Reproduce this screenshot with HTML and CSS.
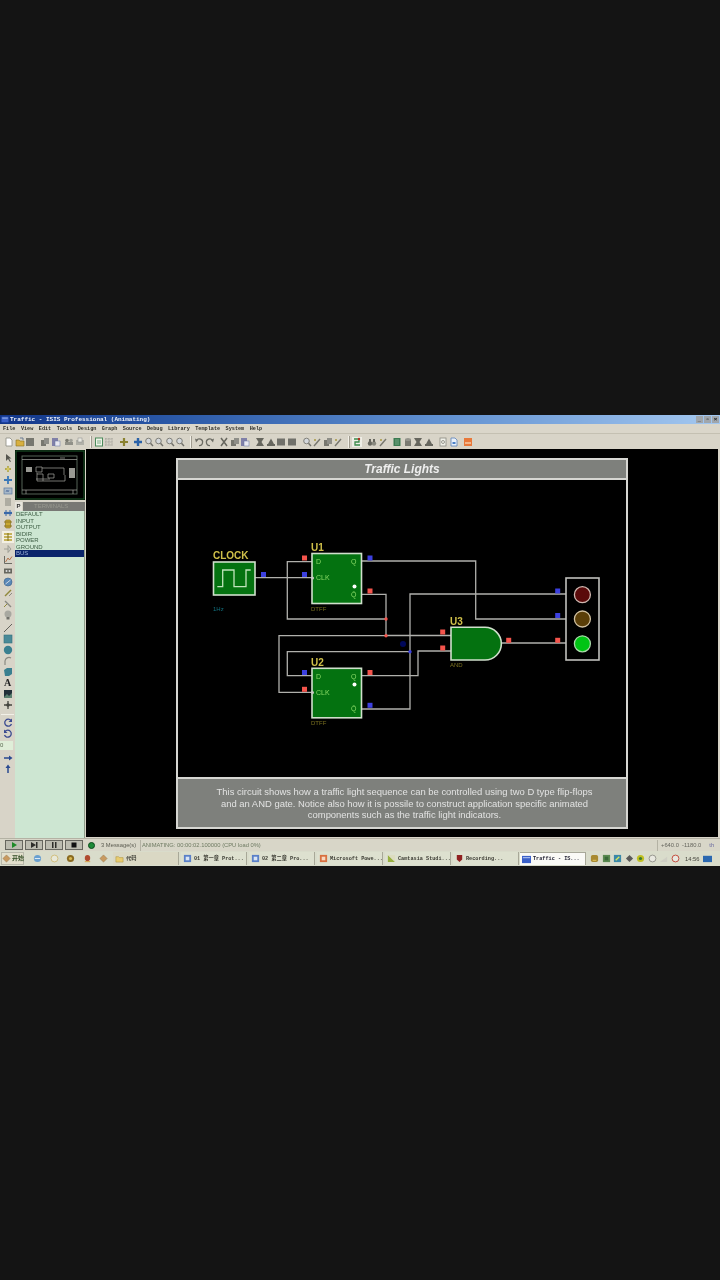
FILE: index.html
```html
<!DOCTYPE html>
<html lang="en">
<head>
<meta charset="utf-8">
<title>Traffic - ISIS Professional</title>
<link rel="stylesheet" href="styles.css">
</head>
<body>
<svg class="defs" aria-hidden="true">
  <symbol id="doc" viewBox="0 0 10 10"><path d="M2 1h4l2 2v6H2z" fill="#fff" stroke="#8a8a80" stroke-width=".8"/></symbol>
  <symbol id="open" viewBox="0 0 10 10"><path d="M1 3h3l1 1h4v5H1z" fill="#d8b040" stroke="#8a7020" stroke-width=".6"/><path d="M5 1h3v2" fill="none" stroke="#6a7a90"/></symbol>
  <symbol id="save" viewBox="0 0 10 10"><rect x="1" y="1" width="8" height="8" fill="#77776f"/></symbol>
  <symbol id="copy" viewBox="0 0 10 10"><rect x="1" y="3" width="5" height="6" fill="#77776f"/><rect x="4" y="1" width="5" height="6" fill="#8e8e88"/></symbol>
  <symbol id="paste" viewBox="0 0 10 10"><rect x="1" y="1" width="6" height="8" fill="#8080a8"/><rect x="4" y="4" width="5" height="5" fill="#e8e8f0" stroke="#6070a0" stroke-width=".5"/></symbol>
  <symbol id="print" viewBox="0 0 10 10"><path d="M1 5h8v3H1z" fill="#909088"/><circle cx="3" cy="3.500" r="1.800" fill="#78786f"/><circle cx="7" cy="3.500" r="1.800" fill="#a0a098"/></symbol>
  <symbol id="page" viewBox="0 0 10 10"><rect x="1" y="3" width="8" height="5" fill="#b0b0a8"/><rect x="3" y="1" width="4" height="4" fill="#e8e8e0" stroke="#888" stroke-width=".5"/></symbol>
  <symbol id="sheet" viewBox="0 0 10 10"><rect x="1.500" y="1" width="7" height="8" fill="#eef4e8" stroke="#4a8a5a"/><path d="M3 4h4M3 6h4" stroke="#4a8a5a" stroke-width=".7"/></symbol>
  <symbol id="grid" viewBox="0 0 10 10"><path d="M1 2h8M1 5h8M1 8h8M2 1v8M5 1v8M8 1v8" stroke="#9a9a92" stroke-width=".8" stroke-dasharray="1 .6"/></symbol>
  <symbol id="cross" viewBox="0 0 10 10"><path d="M5 1v8M1 5h8" stroke="#8a8230" stroke-width="2.200"/></symbol>
  <symbol id="plus" viewBox="0 0 10 10"><path d="M5 1v8M1 5h8" stroke="#2a62a8" stroke-width="2.400"/></symbol>
  <symbol id="zoom" viewBox="0 0 10 10"><circle cx="4.500" cy="4" r="2.800" fill="#d4d8dc" stroke="#80807a"/><path d="M6.500 6.200 9 9" stroke="#70706a" stroke-width="1.400"/></symbol>
  <symbol id="undo" viewBox="0 0 10 10"><path d="M2.500 3.500A3.300 3.300 0 1 1 5 8.500" fill="none" stroke="#6a6a62" stroke-width="1.200"/><path d="M1 1.500 4 3 2 5.500z" fill="#6a6a62"/></symbol>
  <symbol id="redo" viewBox="0 0 10 10"><path d="M7.500 3.500A3.300 3.300 0 1 0 5 8.500" fill="none" stroke="#6a6a62" stroke-width="1.200"/><path d="M9 1.500 6 3 8 5.500z" fill="#6a6a62"/></symbol>
  <symbol id="cut" viewBox="0 0 10 10"><path d="M2 1l6 8M8 1 2 9" stroke="#66665e" stroke-width="1.500"/></symbol>
  <symbol id="block" viewBox="0 0 10 10"><rect x="1" y="1.500" width="8" height="7" fill="#70706a"/></symbol>
  <symbol id="mirror" viewBox="0 0 10 10"><path d="M1 1h8L6.500 5 9 9H1l2.500-4z" fill="#66665e"/></symbol>
  <symbol id="tri" viewBox="0 0 10 10"><path d="M5 1.500 8 7H2z" fill="#66665e"/><rect x="1" y="7" width="8" height="2" fill="#66665e"/></symbol>
  <symbol id="wand" viewBox="0 0 10 10"><path d="M2 9 8 2" stroke="#77776f" stroke-width="1.400"/><circle cx="3" cy="3" r="1" fill="#a89840"/></symbol>
  <symbol id="net" viewBox="0 0 10 10"><rect x="0" y="0" width="10" height="10" fill="#eeeee6"/><path d="M2 2h5v3H3v3h5" fill="none" stroke="#3a8a4a" stroke-width="1.300"/><circle cx="7" cy="2" r="1.200" fill="#b03020"/></symbol>
  <symbol id="bino" viewBox="0 0 10 10"><circle cx="3" cy="6.500" r="2.200" fill="#66665e"/><circle cx="7" cy="6.500" r="2.200" fill="#88887e"/><path d="M2 2h2v3H2zM6 2h2v3H6z" fill="#66665e"/></symbol>
  <symbol id="chip" viewBox="0 0 10 10"><rect x="1.500" y="1" width="7" height="8" fill="#3a7a50"/><path d="M3 3h4M3 5h4M3 7h4" stroke="#a0c8a8" stroke-width=".6"/></symbol>
  <symbol id="drum" viewBox="0 0 10 10"><path d="M2 3h6v6H2z" fill="#7a7a72"/><ellipse cx="5" cy="2.500" rx="3" ry="1.500" fill="#94948c"/></symbol>
  <symbol id="note" viewBox="0 0 10 10"><rect x="2" y="1" width="6" height="8" fill="#f0f0e8" stroke="#8a8a82" stroke-width=".8"/><circle cx="5" cy="5" r="1.500" fill="none" stroke="#77776f" stroke-width=".7"/></symbol>
  <symbol id="bluedoc" viewBox="0 0 10 10"><path d="M2 1h4l2 2v6H2z" fill="#e8f0fa" stroke="#5a80b8" stroke-width=".8"/><path d="M3.500 5h3v2h-3z" fill="#4a80c8"/></symbol>
  <symbol id="orange" viewBox="0 0 10 10"><rect x="1" y="1" width="8" height="8" fill="#e8783a"/><path d="M2 6h6" stroke="#fbe0c0" stroke-width="1.200"/></symbol>
  <symbol id="arrow" viewBox="0 0 10 10"><path d="M3 1v7l2-2 2 3 1-.6-2-3h2.500z" fill="#55554e"/></symbol>
  <symbol id="pin" viewBox="0 0 10 10"><path d="M2 5h6M5 2v6" stroke="#b0a850" stroke-width="1.800"/><circle cx="5" cy="5" r="1.500" fill="#d8c860"/></symbol>
  <symbol id="diamond" viewBox="0 0 10 10"><path d="M5 1v8M1 5h8" stroke="#3a78b8" stroke-width="1.800"/></symbol>
  <symbol id="label" viewBox="0 0 10 10"><rect x="1" y="2" width="8" height="6" fill="#a8b8c8" stroke="#5a78a0" stroke-width=".7"/><path d="M3 6 4 4l1 2 1-2" stroke="#3a5a90" stroke-width=".6" fill="none"/></symbol>
  <symbol id="lines" viewBox="0 0 10 10"><path d="M2 2h6M2 4h6M2 6h6M2 8h6" stroke="#84847c" stroke-width="1"/></symbol>
  <symbol id="bus" viewBox="0 0 10 10"><path d="M1 5h8" stroke="#3a68a8" stroke-width="2.200"/><path d="M3 2v6M7 2v6" stroke="#3a68a8"/></symbol>
  <symbol id="gold" viewBox="0 0 10 10"><rect x="2.500" y="1" width="5" height="8" rx="1" fill="#c8a830" stroke="#806a10" stroke-width=".6"/><path d="M1 3h8M1 7h8" stroke="#907820"/></symbol>
  <symbol id="goldsel" viewBox="0 0 10 10"><path d="M1 2h8M1 5h8M1 8h8" stroke="#b8a030" stroke-width="1.400"/><path d="M5 1v8" stroke="#807010"/></symbol>
  <symbol id="play" viewBox="0 0 10 10"><path d="M5 1.500 8 5 5 8.500zM1 5h4" fill="#c8c8c0" stroke="#94948c" stroke-width=".8"/></symbol>
  <symbol id="chart" viewBox="0 0 10 10"><path d="M1.500 1v7.500H9" fill="none" stroke="#6a6a62"/><path d="M2.500 7 5 3l1.500 2L9 1.500" fill="none" stroke="#b06a40" stroke-width=".9"/></symbol>
  <symbol id="tape" viewBox="0 0 10 10"><rect x="1" y="2.500" width="8" height="5" fill="#66665e"/><circle cx="3.500" cy="5" r="1" fill="#ddd"/><circle cx="6.500" cy="5" r="1" fill="#ddd"/></symbol>
  <symbol id="disc" viewBox="0 0 10 10"><circle cx="5" cy="5" r="4" fill="#5a88b8" stroke="#3a6088" stroke-width=".6"/><path d="M2.500 7 7.500 3" stroke="#d0d8e0"/></symbol>
  <symbol id="probe" viewBox="0 0 10 10"><path d="M2 8 8 2" stroke="#90883a" stroke-width="1.400"/><path d="M6 8 9 5" stroke="#8a8a82"/></symbol>
  <symbol id="probe2" viewBox="0 0 10 10"><path d="M2 2l6 6" stroke="#8a8a82" stroke-width="1.400"/><path d="M1 8 4 5" stroke="#90883a"/></symbol>
  <symbol id="lamp" viewBox="0 0 10 10"><circle cx="5" cy="4" r="3.500" fill="#a8a8a0"/><rect x="3.500" y="7" width="3" height="2.500" fill="#70706a"/></symbol>
  <symbol id="line" viewBox="0 0 10 10"><path d="M1 9 9 1" stroke="#55554e" stroke-width=".9"/></symbol>
  <symbol id="box" viewBox="0 0 10 10"><rect x="1" y="1" width="8" height="8" fill="#4a8a98" stroke="#34707c" stroke-width=".6"/></symbol>
  <symbol id="ball" viewBox="0 0 10 10"><circle cx="5" cy="5" r="4.200" fill="#3a8090"/></symbol>
  <symbol id="arc" viewBox="0 0 10 10"><path d="M2 9V5a4 4 0 0 1 6-3" fill="none" stroke="#8a8a82" stroke-width="1.200"/></symbol>
  <symbol id="poly" viewBox="0 0 10 10"><path d="M1 3 4 1h5v6L6 9H2z" fill="#3a8090"/></symbol>
  <symbol id="pic" viewBox="0 0 10 10"><rect x="1" y="1" width="8" height="8" fill="#23303a"/><path d="M1 8 4 5l2 2 3-3v5H1z" fill="#5a8070"/></symbol>
  <symbol id="star" viewBox="0 0 10 10"><path d="M5 1v8M1 5h8" stroke="#44443e" stroke-width="1.300"/><circle cx="5" cy="5" r="1.700" fill="#44443e"/></symbol>
  <symbol id="rotr" viewBox="0 0 10 10"><path d="M8 2.500A3.500 3.500 0 1 0 8.500 6" fill="none" stroke="#3a4a90" stroke-width="1.300"/><path d="M9 .5V4H5.500z" fill="#3a4a90"/></symbol>
  <symbol id="rotl" viewBox="0 0 10 10"><path d="M2 2.500A3.500 3.500 0 1 1 1.500 6" fill="none" stroke="#3a4a90" stroke-width="1.300"/><path d="M1 .5V4h3.500z" fill="#3a4a90"/></symbol>
  <symbol id="flipx" viewBox="0 0 10 10"><path d="M1 5h7" stroke="#2a4a90" stroke-width="1.500"/><path d="M6 2.500 9.500 5 6 7.500z" fill="#2a4a90"/></symbol>
  <symbol id="flipy" viewBox="0 0 10 10"><path d="M5 9V3" stroke="#2a4a90" stroke-width="1.500"/><path d="M2.500 4 5 .5 7.500 4z" fill="#2a4a90"/></symbol>
  <symbol id="ie" viewBox="0 0 10 10"><circle cx="5" cy="5" r="4" fill="#6aa0d0"/><path d="M2 5h6" stroke="#e8f0f8"/></symbol>
  <symbol id="shell" viewBox="0 0 10 10"><circle cx="5" cy="5" r="3.800" fill="#e8e8d8" stroke="#c8b060" stroke-width=".8"/></symbol>
  <symbol id="ring" viewBox="0 0 10 10"><circle cx="5" cy="5" r="4" fill="#8a6a20"/><circle cx="5" cy="5" r="1.800" fill="#d8b850"/></symbol>
  <symbol id="qq" viewBox="0 0 10 10"><ellipse cx="5" cy="4.500" rx="3" ry="3.500" fill="#b04a30"/><path d="M2 8.500h6" stroke="#d8a040"/></symbol>
  <symbol id="tag" viewBox="0 0 10 10"><path d="M5 1 9 5 5 9 1 5z" fill="#c89a60" stroke="#8a6a3a" stroke-width=".5"/></symbol>
  <symbol id="folder" viewBox="0 0 10 10"><path d="M1 3h3l1 1h4v5H1z" fill="#e8cc70" stroke="#a08830" stroke-width=".5"/></symbol>
  <symbol id="word" viewBox="0 0 10 10"><rect x="1" y="1" width="8" height="8" fill="#5a80c8"/><path d="M3 3h4v4H3z" fill="#d8e4f4"/></symbol>
  <symbol id="ppt" viewBox="0 0 10 10"><rect x="1" y="1" width="8" height="8" fill="#d87040"/><path d="M3 3h4v4H3z" fill="#f8d8c0"/></symbol>
  <symbol id="cam" viewBox="0 0 10 10"><path d="M1 1 9 9H1z" fill="#98b040"/><path d="M1 1h8v8z" fill="#dcdcc0"/></symbol>
  <symbol id="rec" viewBox="0 0 10 10"><path d="M2 1h6v5L5 9 2 6z" fill="#902020"/></symbol>
  <symbol id="win" viewBox="0 0 10 10"><rect x="0" y="1" width="10" height="8" fill="#3a60c8"/><path d="M1 3h8" stroke="#c8d8f8"/></symbol>
  <symbol id="t1" viewBox="0 0 10 10"><rect x="1" y="1" width="8" height="8" rx="2" fill="#a88a30"/><path d="M3 7h4" stroke="#e8c860"/></symbol>
  <symbol id="t2" viewBox="0 0 10 10"><rect x="1" y="1" width="8" height="8" fill="#5a8a50"/><rect x="3" y="3" width="4" height="4" fill="#3a6a38"/></symbol>
  <symbol id="t3" viewBox="0 0 10 10"><rect x="1" y="1" width="8" height="8" fill="#3a88a8"/><path d="M3 7 7 3" stroke="#d8e858" stroke-width="1.400"/></symbol>
  <symbol id="t4" viewBox="0 0 10 10"><path d="M5 1 9 5 5 9 1 5z" fill="#5a5a58"/></symbol>
  <symbol id="t5" viewBox="0 0 10 10"><circle cx="5" cy="5" r="4" fill="#c0c020"/><circle cx="5" cy="5" r="1.800" fill="#3a7a30"/></symbol>
  <symbol id="t6" viewBox="0 0 10 10"><circle cx="5" cy="5" r="3.800" fill="#e8e8e0" stroke="#909088"/></symbol>
  <symbol id="t7" viewBox="0 0 10 10"><path d="M1 9 9 3v6z" fill="#cfcfc4"/></symbol>
  <symbol id="t8" viewBox="0 0 10 10"><circle cx="5" cy="5" r="3.800" fill="#e8e8e0" stroke="#c04030"/></symbol>
  <symbol id="t9" viewBox="0 0 10 10"><rect x="0" y="2" width="10" height="7" fill="#2a68b0"/></symbol>
</svg>

<main class="desktop">
  <header class="titlebar">
    <svg class="ico-title"><use href="#win"/></svg>
    <span class="title-text">Traffic - ISIS Professional (Animating)</span>
    <div class="winbtns"><span class="wb">_</span><span class="wb">▫</span><span class="wb">×</span></div>
  </header>

  <nav class="menubar">
    <span>File</span><span>View</span><span>Edit</span><span>Tools</span><span>Design</span><span>Graph</span><span>Source</span><span>Debug</span><span>Library</span><span>Template</span><span>System</span><span>Help</span>
  </nav>

  <div class="toolbar">
    <div class="tg"><svg class="i"><use href="#doc"/></svg><svg class="i"><use href="#open"/></svg><svg class="i"><use href="#save"/></svg></div>
    <div class="tg m5"><svg class="i"><use href="#copy"/></svg><svg class="i"><use href="#paste"/></svg></div>
    <div class="tg m3"><svg class="i"><use href="#print"/></svg><svg class="i"><use href="#page"/></svg></div>
    <span class="sep"></span>
    <div class="tg m1"><svg class="i"><use href="#sheet"/></svg><svg class="i"><use href="#grid"/></svg></div>
    <div class="tg m4"><svg class="i"><use href="#cross"/></svg></div>
    <div class="tg m4"><svg class="i"><use href="#plus"/></svg><svg class="i"><use href="#zoom"/></svg><svg class="i"><use href="#zoom"/></svg><svg class="i"><use href="#zoom"/></svg><svg class="i"><use href="#zoom"/></svg></div>
    <span class="sep"></span>
    <div class="tg m1"><svg class="i"><use href="#undo"/></svg><svg class="i"><use href="#redo"/></svg></div>
    <div class="tg m4"><svg class="i"><use href="#cut"/></svg><svg class="i"><use href="#copy"/></svg><svg class="i"><use href="#paste"/></svg></div>
    <div class="tg m5"><svg class="i"><use href="#mirror"/></svg><svg class="i"><use href="#tri"/></svg><svg class="i"><use href="#block"/></svg><svg class="i"><use href="#block"/></svg></div>
    <div class="tg m5"><svg class="i"><use href="#zoom"/></svg><svg class="i"><use href="#wand"/></svg><svg class="i"><use href="#copy"/></svg><svg class="i"><use href="#wand"/></svg></div>
    <span class="sep"></span>
    <div class="tg m1"><svg class="i"><use href="#net"/></svg></div>
    <div class="tg m5"><svg class="i"><use href="#bino"/></svg><svg class="i"><use href="#wand"/></svg></div>
    <div class="tg m4"><svg class="i"><use href="#chip"/></svg><svg class="i"><use href="#drum"/></svg><svg class="i"><use href="#mirror"/></svg><svg class="i"><use href="#tri"/></svg></div>
    <div class="tg m4"><svg class="i"><use href="#note"/></svg><svg class="i"><use href="#bluedoc"/></svg></div>
    <div class="tg m4"><svg class="i"><use href="#orange"/></svg></div>
  </div>

  <div class="workspace">
    <aside class="tools">
      <svg class="t"><use href="#arrow"/></svg>
      <svg class="t"><use href="#pin"/></svg>
      <svg class="t"><use href="#diamond"/></svg>
      <svg class="t"><use href="#label"/></svg>
      <svg class="t"><use href="#lines"/></svg>
      <svg class="t"><use href="#bus"/></svg>
      <svg class="t"><use href="#gold"/></svg>
      <svg class="t t-sel"><use href="#goldsel"/></svg>
      <svg class="t"><use href="#play"/></svg>
      <svg class="t"><use href="#chart"/></svg>
      <svg class="t"><use href="#tape"/></svg>
      <svg class="t"><use href="#disc"/></svg>
      <svg class="t"><use href="#probe"/></svg>
      <svg class="t"><use href="#probe2"/></svg>
      <svg class="t"><use href="#lamp"/></svg>
      <span class="t-gap"></span>
      <svg class="t"><use href="#line"/></svg>
      <svg class="t"><use href="#box"/></svg>
      <svg class="t"><use href="#ball"/></svg>
      <svg class="t"><use href="#arc"/></svg>
      <svg class="t"><use href="#poly"/></svg>
      <span class="t t-a">A</span>
      <svg class="t"><use href="#pic"/></svg>
      <svg class="t"><use href="#star"/></svg>
      <span class="t-rule"></span>
      <svg class="t"><use href="#rotr"/></svg>
      <svg class="t"><use href="#rotl"/></svg>
      <span class="t-input">0</span>
      <svg class="t t-after"><use href="#flipx"/></svg>
      <svg class="t"><use href="#flipy"/></svg>
    </aside>

    <section class="sidebar">
      <div class="preview">
        <svg class="preview-svg" viewBox="0 0 70 50">
          <rect class="pv-green" x="1" y="1" width="68" height="48"/>
          <rect class="pv-box" x="7" y="6" width="55" height="38"/>
          <path class="pv-line" d="M7 9.500h55M7 40h55M11 40v4M58 40v4M50 8h-5"/>
          <rect class="pv-fill" x="11" y="17" width="6" height="5"/>
          <path class="pv-line" d="M21 17h6v5h-6zM27 18h22v7M22 23v8h6v-7h-6M28 31h22v-6M33 24v4h6v-4zM21 29h14"/>
          <rect class="pv-fill" x="54" y="18" width="6" height="10"/>
        </svg>
      </div>
      <div class="tabrow"><span class="tab-p">P</span><span class="tab-title">TERMINALS</span></div>
      <ul class="termlist">
        <li>DEFAULT</li><li>INPUT</li><li>OUTPUT</li><li>BIDIR</li><li>POWER</li><li>GROUND</li><li class="sel">BUS</li>
      </ul>
    </section>

    <section class="canvas">
      <div class="sheet">
        <h1 class="sheet-title">Traffic Lights</h1>
        <svg class="schematic" viewBox="178 480 448 297">
          <g class="wire">
            <path d="M255 577.700H312"/>
            <path d="M312 561.700H287.300V619H386"/>
            <path d="M362 594.300H386V635.700H279V692.300H312"/>
            <path d="M386 635.500H451"/>
            <path d="M312 675.700H287.300V651.700H410"/>
            <path d="M566 594H410V709H362"/>
            <path d="M362 675.700H418V651H451"/>
            <path d="M362 561H475.700V619H566"/>
            <path d="M500 643H566"/>
          </g>
          <g class="part">
            <rect x="213.500" y="562" width="41.500" height="33"/>
            <rect x="312" y="553.500" width="49.500" height="50"/>
            <rect x="312" y="668.300" width="49.500" height="49.500"/>
            <path d="M451 627.300H485A16.300 16.300 0 0 1 485 660H451Z"/>
          </g>
          <path class="wave" d="M217.300 586.700H222.700V570H234V586.700H246V570H250.700"/>
          <text class="ref" x="213" y="559">CLOCK</text>
          <text class="ref" x="311" y="551">U1</text>
          <text class="ref" x="311" y="666">U2</text>
          <text class="ref" x="450" y="625">U3</text>
          <text class="sub" x="311" y="610.500">DTFF</text>
          <text class="sub" x="311" y="724.500">DTFF</text>
          <text class="sub" x="450" y="667">AND</text>
          <text class="hz" x="213" y="610.500">1Hz</text>
          <text class="pinl" x="316" y="564">D</text>
          <text class="pinl" x="316" y="580">CLK</text>
          <text class="pinl" x="351" y="564">Q</text>
          <text class="pinl" x="351" y="597">Q̄</text>
          <text class="pinl" x="316" y="679">D</text>
          <text class="pinl" x="316" y="695">CLK</text>
          <text class="pinl" x="351" y="679">Q</text>
          <text class="pinl" x="351" y="711">Q̄</text>
          <circle class="dot" cx="354.500" cy="586.500" r="2"/>
          <circle class="dot" cx="354.500" cy="684.500" r="2"/>
          <circle class="jn" cx="312.500" cy="578" r="1.500"/>
          <circle class="jn" cx="312.500" cy="692.500" r="1.500"/>
          <g class="red">
            <rect x="302" y="555.500" width="5" height="5"/><rect x="367.500" y="588.500" width="5" height="5"/><rect x="302" y="686.800" width="5" height="5"/><rect x="367.500" y="670" width="5" height="5"/><rect x="440.200" y="629.500" width="5" height="5"/><rect x="440.200" y="645.500" width="5" height="5"/><rect x="506.200" y="637.800" width="5" height="5"/><rect x="555.200" y="637.800" width="5" height="5"/>
            <circle cx="386" cy="619" r="1.700"/><circle cx="386" cy="635.700" r="1.700"/>
          </g>
          <g class="blue">
            <rect x="261" y="572" width="5" height="5"/><rect x="302" y="572" width="5" height="5"/><rect x="367.500" y="555.500" width="5" height="5"/><rect x="302" y="670" width="5" height="5"/><rect x="367.500" y="702.800" width="5" height="5"/><rect x="555.200" y="588.500" width="5" height="5"/><rect x="555.200" y="613" width="5" height="5"/>
            <circle cx="410" cy="651.700" r="1.700"/>
          </g>
          <circle class="navy" cx="403" cy="644" r="3"/>
          <rect class="lightbox" x="566" y="578" width="33" height="82"/>
          <circle class="lamp-red" cx="582.400" cy="594.700" r="8"/>
          <circle class="lamp-amb" cx="582.400" cy="619" r="8"/>
          <circle class="lamp-grn" cx="582.400" cy="643.800" r="8"/>
        </svg>
        <p class="sheet-note">This circuit shows how a traffic light sequence can be controlled using two D type flip-flops<br>and an AND gate. Notice also how it is possile to construct application specific animated<br>components such as the traffic light indicators.</p>
      </div>
    </section>
  </div>

  <div class="statusbar">
    <div class="transport">
      <span class="tbtn"><svg class="g"><path class="g-play" d="M2 1 7 4 2 7z"/></svg></span>
      <span class="tbtn"><svg class="g"><path class="g-dark" d="M1 1 6 4 1 7zM6 1h1.500v6H6z"/></svg></span>
      <span class="tbtn"><svg class="g"><path class="g-dark" d="M2 1h1.500v6H2zM5 1h1.500v6H5z"/></svg></span>
      <span class="tbtn"><svg class="g"><path class="g-black" d="M1.500 1.500h5v5h-5z"/></svg></span>
    </div>
    <span class="led"></span>
    <span class="msg">3 Message(s)</span>
    <span class="anim">ANIMATING: 00:00:02.100000 (CPU load 0%)</span>
    <span class="coords">+640.0&nbsp;&nbsp;-1180.0</span>
    <span class="th">th</span>
  </div>

  <footer class="taskbar">
    <span class="start"><svg class="ti"><use href="#tag"/></svg>开始</span>
    <div class="quick"><svg class="ti"><use href="#ie"/></svg><svg class="ti"><use href="#shell"/></svg><svg class="ti"><use href="#ring"/></svg><svg class="ti"><use href="#qq"/></svg><svg class="ti"><use href="#tag"/></svg></div>
    <div class="tasks">
      <span class="task"><svg class="ti"><use href="#folder"/></svg>代码</span>
      <span class="task"><svg class="ti"><use href="#word"/></svg>01 第一章 Prot...</span>
      <span class="task"><svg class="ti"><use href="#word"/></svg>02 第二章 Pro...</span>
      <span class="task"><svg class="ti"><use href="#ppt"/></svg>Microsoft Powe...</span>
      <span class="task"><svg class="ti"><use href="#cam"/></svg>Camtasia Studi...</span>
      <span class="task"><svg class="ti"><use href="#rec"/></svg>Recording...</span>
      <span class="task active"><svg class="ti"><use href="#win"/></svg>Traffic - IS...</span>
    </div>
    <div class="tray">
      <svg class="ti"><use href="#t1"/></svg><svg class="ti"><use href="#t2"/></svg><svg class="ti"><use href="#t3"/></svg><svg class="ti"><use href="#t4"/></svg><svg class="ti"><use href="#t5"/></svg><svg class="ti"><use href="#t6"/></svg><svg class="ti"><use href="#t7"/></svg><svg class="ti"><use href="#t8"/></svg>
      <span class="clock">14:56</span>
      <svg class="ti"><use href="#t9"/></svg>
    </div>
  </footer>
</main>
</body>
</html>
```

FILE: styles.css
```css
* { box-sizing: border-box; }
html, body { margin: 0; padding: 0; }
body {
  background: #141414;
  width: 720px;
  height: 1280px;
  overflow: hidden;
  padding-top: 415px;
  font-family: "Liberation Sans", Arial, sans-serif;
}
.defs { display: none; }
.desktop {
  width: 720px;
  height: 451px;
  display: flex;
  flex-direction: column;
  filter: blur(0.6px);
  background: #d8d4c8;
}

.titlebar {
  height: 9px;
  flex: none;
  display: flex;
  align-items: center;
  background: linear-gradient(90deg, #12368a 0%, #2c5aa8 25%, #5f8fd0 60%, #a4c8f0 100%);
}
.ico-title { width: 8px; height: 7px; margin: 0 1px 0 1px; flex: none; }
.title-text {
  font: bold 6px/9px "Liberation Mono", monospace;
  color: #f0f4fa;
}
.winbtns { margin-left: auto; display: flex; gap: 1px; margin-right: 1px; }
.wb {
  width: 7px;
  height: 7px;
  background: #a0a6ac;
  color: #111;
  font: bold 6px/7px "Liberation Sans", sans-serif;
  text-align: center;
}

.menubar {
  height: 10px;
  flex: none;
  display: flex;
  align-items: center;
  gap: 5.450px;
  padding: 1px 0 0 3px;
  background: #dad6ca;
  border-bottom: 1px solid #c4c0b2;
  font: bold 5.200px/8px "Liberation Mono", monospace;
  color: #2e2e28;
}

.toolbar {
  height: 15px;
  flex: none;
  display: flex;
  align-items: center;
  padding-left: 4px;
  background: #d8d4c8;
}
.tg { display: flex; gap: .5px; flex: none; }
.m1 { margin-left: 2px; }
.m3 { margin-left: 3.500px; }
.m4 { margin-left: 4.500px; }
.m5 { margin-left: 5px; }
.i { width: 10px; height: 10px; flex: none; }
.sep {
  width: 2px;
  height: 12px;
  margin-left: 5px;
  flex: none;
  border-left: 1px solid #f2f0e8;
  border-right: 1px solid #a09c90;
}

.workspace {
  flex: 1;
  min-height: 0;
  display: flex;
  background: #d8d4c8;
}
.tools {
  width: 15px;
  flex: none;
  display: flex;
  flex-direction: column;
  align-items: center;
  padding-top: 4px;
}
.t { width: 10px; height: 10px; margin-bottom: 1px; flex: none; }
.t-sel { background: #f2efe2; outline: 1px solid #f2efe2; margin: 2px 0 1.500px; }
.t-gap { height: 2px; flex: none; }
.t-a {
  font: bold 10px/10px "Liberation Serif", serif;
  color: #222;
  text-align: center;
}
.t-rule {
  width: 13px;
  height: 1px;
  margin: 3px 0 3px;
  background: #f2f0e8;
  flex: none;
}
.t-input {
  width: 13px;
  height: 9px;
  margin-top: 1px;
  align-self: flex-start;
  background: #dfeed8;
  font: 6px/9px "Liberation Sans", sans-serif;
  color: #5a6a50;
  flex: none;
}
.t-after { margin-top: 3px; }

.sidebar {
  width: 70px;
  flex: none;
  display: flex;
  flex-direction: column;
}
.preview {
  height: 50px;
  flex: none;
  margin-top: 1px;
  background: #000;
}
.preview-svg { display: block; width: 70px; height: 50px; }
.pv-green { fill: none; stroke: #1a5a28; stroke-width: 1; }
.pv-box { fill: #000; stroke: #5e6e60; stroke-width: .9; }
.pv-line { fill: none; stroke: #a8a8a2; stroke-width: .7; }
.pv-fill { fill: #9a9a94; }
.tabrow {
  height: 9px;
  flex: none;
  margin-top: 2px;
  display: flex;
  gap: 1px;
}
.tab-p {
  width: 7px;
  background: #e6e4dc;
  font: bold 6px/9px "Liberation Sans", sans-serif;
  color: #333;
  text-align: center;
  flex: none;
}
.tab-title {
  flex: 1;
  background: #787874;
  font: 6px/9px "Liberation Sans", sans-serif;
  color: #98988f;
  padding-left: 11px;
}
.termlist {
  flex: 1;
  margin: 0;
  padding: 0;
  list-style: none;
  background: #cde6d2;
  border-right: 1px solid #8e9e8a;
  font: 6px/6.500px "Liberation Sans", sans-serif;
  color: #3e5e44;
}
.termlist li { height: 6.500px; padding-left: 1px; }
.termlist .sel { background: #0a246a; color: #9ab0d8; }

.canvas {
  flex: 1;
  margin: 0 2px 1px 1px;
  background: #000;
  padding: 9px 0 0 90px;
}
.sheet {
  width: 452px;
  height: 371px;
  display: flex;
  flex-direction: column;
  border: 2px solid #d6d6d2;
  background: #000;
}
.sheet-title {
  margin: 0;
  height: 20px;
  flex: none;
  background: #7e807c;
  border-bottom: 2px solid #d6d6d2;
  font: italic bold 12px/18px "Liberation Sans", Arial, sans-serif;
  color: #eeeeee;
  text-align: center;
}
.schematic { display: block; width: 448px; height: 297px; flex: none; }
.sheet-note {
  margin: 0;
  flex: 1;
  background: #7e807c;
  border-top: 2px solid #d6d6d2;
  padding: 7px 0 0 5px;
  font: 9.450px/11.700px "Liberation Sans", Arial, sans-serif;
  color: #e2e2e2;
  text-align: center;
}

.wire { fill: none; stroke: #b0b0ac; stroke-width: 1.300; }
.part { fill: #047210; stroke: #d0e0cc; stroke-width: 1.600; }
.wave { fill: none; stroke: #c0e4bc; stroke-width: 1.300; }
.ref { font: bold 10px "Liberation Sans", sans-serif; fill: #d0c04a; }
.sub { font: 6px "Liberation Sans", sans-serif; fill: #7a7020; }
.hz { font: 6px "Liberation Sans", sans-serif; fill: #12707f; }
.pinl { font: 7px "Liberation Sans", sans-serif; fill: #86d864; }
.dot { fill: #ffffff; }
.jn { fill: #c8c8c4; }
.red { fill: #f4544c; }
.blue { fill: #3c40e0; }
.navy { fill: #00085a; }
.lightbox { fill: #000; stroke: #c0c0bc; stroke-width: 1.600; }
.lamp-red { fill: #5a0a0a; stroke: #d0b8b0; stroke-width: 1.300; }
.lamp-amb { fill: #5a3e08; stroke: #d0c0a0; stroke-width: 1.300; }
.lamp-grn { fill: #00c414; stroke: #a8d8a8; stroke-width: 1.300; }

.statusbar {
  height: 13px;
  flex: none;
  display: flex;
  align-items: center;
  background: #d8d6c8;
  border-top: 1px solid #b4b2a4;
  font: 5.800px/11px "Liberation Sans", sans-serif;
  color: #6e7a62;
  white-space: nowrap;
}
.transport { display: flex; gap: 2px; margin-left: 5px; flex: none; }
.tbtn {
  width: 18px;
  height: 10px;
  display: flex;
  align-items: center;
  justify-content: center;
  background: #bcbcb0;
  border: 1px solid #66665e;
}
.g { width: 8px; height: 8px; }
.g-play { fill: #1e8a28; }
.g-dark { fill: #2e2e2a; }
.g-black { fill: #111; }
.led {
  width: 7px;
  height: 7px;
  margin-left: 5px;
  flex: none;
  border-radius: 50%;
  background: #1e8a38;
  border: 1px solid #0c4a1c;
}
.msg {
  width: 34px;
  margin-left: 4px;
  flex: none;
  padding-left: 2px;
  color: #5a5a50;
}
.anim {
  width: 517px;
  margin-left: 7px;
  flex: none;
  padding-left: 1px;
  border-left: 1px solid #b4b2a4;
}
.coords {
  color: #66665e;
  padding-left: 3px;
  border-left: 1px solid #b4b2a4;
}
.th { margin-left: 8px; color: #6a6aa0; }

.taskbar {
  height: 15px;
  flex: none;
  display: flex;
  align-items: center;
  background: #d9dccb;
  font: bold 5.200px/12px "Liberation Mono", "Noto Sans CJK SC", monospace;
  color: #3a3a32;
  white-space: nowrap;
}
.ti { width: 9px; height: 9px; flex: none; }
.start {
  width: 23px;
  height: 13px;
  margin-left: 1px;
  display: flex;
  align-items: center;
  gap: 1px;
  flex: none;
  background: #e2dfcc;
  border: 1px solid #b8b8aa;
  color: #2e4a20;
  font-size: 6px;
}
.quick { display: flex; gap: 7.500px; margin-left: 9px; flex: none; }
.tasks { display: flex; gap: 2px; margin-left: 5px; flex: none; }
.task {
  width: 66px;
  height: 13px;
  display: flex;
  align-items: center;
  gap: 2px;
  padding-left: 2px;
  flex: none;
  background: #dde0cf;
  border-right: 1px solid #a8a898;
  overflow: hidden;
}
.task:first-child { background: #dad8c4; }
.active {
  background: #fafaf6;
  border-top: 1px solid #a8a89a;
  margin-left: -1px;
  color: #223;
}
.tray { display: flex; align-items: center; gap: 2.500px; margin-left: 4px; flex: none; }
.clock { font: 5.800px/12px "Liberation Sans", sans-serif; color: #44443c; margin: 0 1px 0 3px; }
```
